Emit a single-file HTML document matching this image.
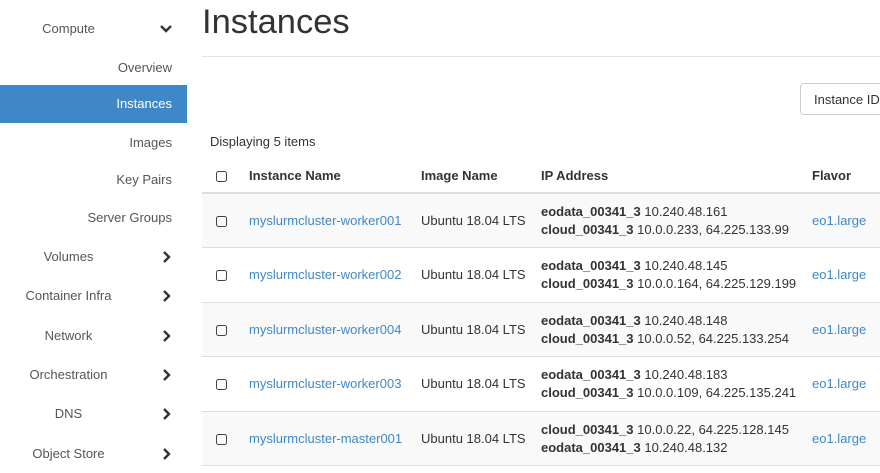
<!DOCTYPE html>
<html><head><style>
*{margin:0;padding:0;box-sizing:border-box}
body{width:880px;height:473px;overflow:hidden;background:#fff;font-family:"Liberation Sans",Arial,sans-serif;font-size:13px;color:#333;position:relative}
.sb{position:absolute;left:0;top:1px;width:187px}
.it{position:absolute;left:0;width:187px;height:38px;line-height:38px}
.sub{text-align:right;padding-right:15px;color:#555}
.cat{color:#555}
.cat span{position:absolute;width:137px;text-align:center;left:0}
.chev{position:absolute;left:159px;top:0}
.act{background:#3f88c8;color:#fff}
h1{position:absolute;left:202px;top:3px;font-size:34.5px;font-weight:normal;color:#333}
.hr{position:absolute;left:202px;right:0;top:56px;border-top:1px solid #e5e5e5}
.btn{position:absolute;left:800px;top:83px;width:100px;height:32px;border:1px solid #ccc;border-radius:4px;padding:8px 13px;font-size:13px;color:#333}
.disp{position:absolute;left:210px;top:134px}
table{position:absolute;left:202px;top:159px;width:700px;border-collapse:collapse}
th{text-align:left;height:34px;border-bottom:2px solid #ddd;font-weight:bold;padding-left:0}
td{height:54.5px;border-bottom:1px solid #ddd;line-height:18px;padding-top:1px}
tr.s td{background:#f9f9f9}
.cb{width:47px;padding-left:14px}
.cb i{display:inline-block;width:11px;height:11px;border:1.3px solid #444;border-radius:2.5px;vertical-align:middle}
a{color:#3f88c8;text-decoration:none}
</style></head><body>
<div class="sb">
<div class="it cat" style="top:9px"><span>Compute</span><svg class="chev" width="14" height="38" viewBox="0 0 14 38"><path d="M2 16l5 5 5-5" stroke="#333" stroke-width="2.4" fill="none"/></svg></div>
<div class="it sub" style="top:48px">Overview</div>
<div class="it sub act" style="top:84px">Instances</div>
<div class="it sub" style="top:123px">Images</div>
<div class="it sub" style="top:160px">Key Pairs</div>
<div class="it sub" style="top:198px">Server Groups</div>
<div class="it cat" style="top:237px"><span>Volumes</span><svg class="chev" width="14" height="38" viewBox="0 0 14 38"><path d="M5 14l5 5-5 5" stroke="#333" stroke-width="2.4" fill="none"/></svg></div>
<div class="it cat" style="top:276px"><span>Container Infra</span><svg class="chev" width="14" height="38" viewBox="0 0 14 38"><path d="M5 14l5 5-5 5" stroke="#333" stroke-width="2.4" fill="none"/></svg></div>
<div class="it cat" style="top:316px"><span>Network</span><svg class="chev" width="14" height="38" viewBox="0 0 14 38"><path d="M5 14l5 5-5 5" stroke="#333" stroke-width="2.4" fill="none"/></svg></div>
<div class="it cat" style="top:355px"><span>Orchestration</span><svg class="chev" width="14" height="38" viewBox="0 0 14 38"><path d="M5 14l5 5-5 5" stroke="#333" stroke-width="2.4" fill="none"/></svg></div>
<div class="it cat" style="top:394px"><span>DNS</span><svg class="chev" width="14" height="38" viewBox="0 0 14 38"><path d="M5 14l5 5-5 5" stroke="#333" stroke-width="2.4" fill="none"/></svg></div>
<div class="it cat" style="top:434px"><span>Object Store</span><svg class="chev" width="14" height="38" viewBox="0 0 14 38"><path d="M5 14l5 5-5 5" stroke="#333" stroke-width="2.4" fill="none"/></svg></div>
</div>
<h1>Instances</h1>
<div class="hr"></div>
<div class="btn">Instance ID</div>
<div class="disp">Displaying 5 items</div>
<table>
<tr><th class="cb"><i></i></th><th style="width:172px">Instance Name</th><th style="width:120px">Image Name</th><th style="width:271px">IP Address</th><th>Flavor</th></tr>
<tr class="s"><td class="cb"><i></i></td><td><a>myslurmcluster-worker001</a></td><td>Ubuntu 18.04 LTS</td><td><b>eodata_00341_3</b> 10.240.48.161<br><b>cloud_00341_3</b> 10.0.0.233, 64.225.133.99</td><td><a>eo1.large</a></td></tr>
<tr><td class="cb"><i></i></td><td><a>myslurmcluster-worker002</a></td><td>Ubuntu 18.04 LTS</td><td><b>eodata_00341_3</b> 10.240.48.145<br><b>cloud_00341_3</b> 10.0.0.164, 64.225.129.199</td><td><a>eo1.large</a></td></tr>
<tr class="s"><td class="cb"><i></i></td><td><a>myslurmcluster-worker004</a></td><td>Ubuntu 18.04 LTS</td><td><b>eodata_00341_3</b> 10.240.48.148<br><b>cloud_00341_3</b> 10.0.0.52, 64.225.133.254</td><td><a>eo1.large</a></td></tr>
<tr><td class="cb"><i></i></td><td><a>myslurmcluster-worker003</a></td><td>Ubuntu 18.04 LTS</td><td><b>eodata_00341_3</b> 10.240.48.183<br><b>cloud_00341_3</b> 10.0.0.109, 64.225.135.241</td><td><a>eo1.large</a></td></tr>
<tr class="s"><td class="cb"><i></i></td><td><a>myslurmcluster-master001</a></td><td>Ubuntu 18.04 LTS</td><td><b>cloud_00341_3</b> 10.0.0.22, 64.225.128.145<br><b>eodata_00341_3</b> 10.240.48.132</td><td><a>eo1.large</a></td></tr>
</table>
</body></html>
